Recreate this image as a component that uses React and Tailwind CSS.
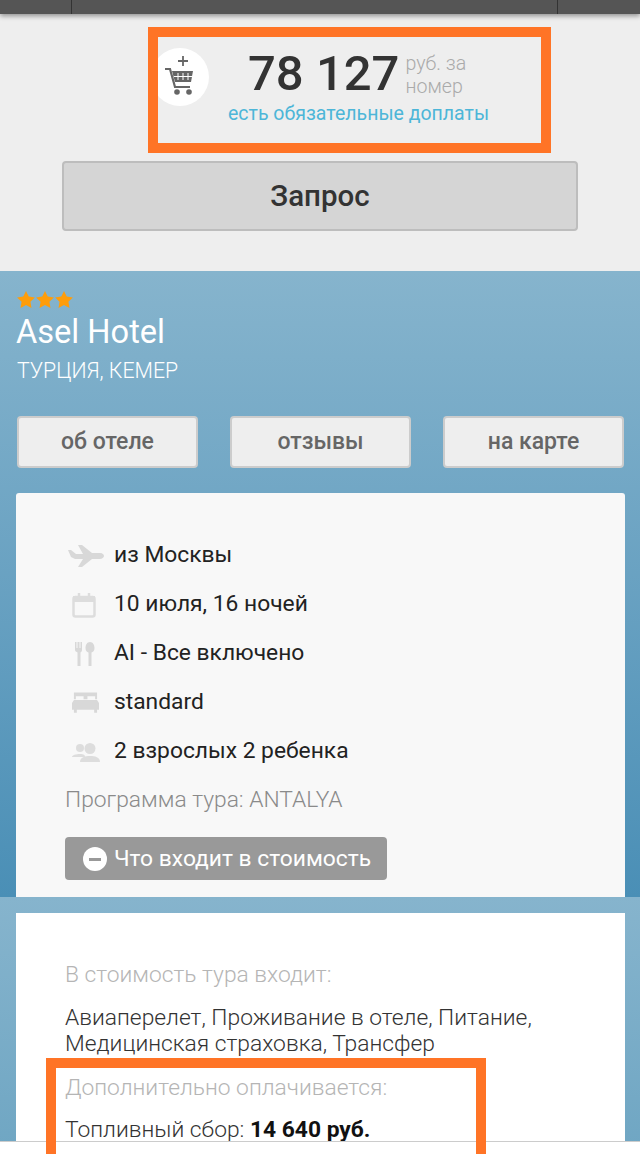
const font = { fontFamily: "Roboto, sans-serif" };

// cart with the little plus above it
function CartIcon() {
	return (
		<svg width="32" height="44" viewBox="0 0 32 44" fill="none">
			<path d="M14 7h10M19 2v10" stroke="#666" strokeWidth="1.800" />
			<path d="M1 15h5l5 18h15" stroke="#666" strokeWidth="2.200" />
			<path d="M8 17h21l-2 11H11z" fill="#666" />
			<path d="M14 19v7M19 19v7M24 19v7M10 22.500h18" stroke="#fff" strokeWidth="1" />
			<circle cx="13" cy="38" r="2.800" fill="#666" />
			<circle cx="25" cy="38" r="2.800" fill="#666" />
		</svg>
	);
}

function PlaneIcon() {
	return (
		<svg width="36" height="22" viewBox="0 0 36 22" fill="#d8d8d8">
			<path d="M0 5h3l5 4h7L10 0h4l10 8h8c3 0 4 2 4 3s-2 3-4 3h-8L14 22h-4l5-8H7L3 12z" />
		</svg>
	);
}

function CalendarIcon() {
	return (
		<svg width="24" height="26" viewBox="0 0 24 26" fill="none">
			<rect x="1.500" y="5" width="21" height="19.500" rx="2" fill="#f8f8f8" stroke="#dddddd" strokeWidth="2.500" />
			<rect x="1" y="4" width="22" height="6" fill="#dddddd" />
			<path d="M7 1v6M17 1v6" stroke="#dddddd" strokeWidth="2.500" />
		</svg>
	);
}

function ForkIcon() {
	return (
		<svg width="20" height="24" viewBox="0 0 20 24" fill="#d8d8d8">
			<path d="M0 0h1.500v6h1V0h2v6h1V0H7v8c0 1.500-1 2-1.500 2.500V24h-3V10.500C2 10 0 9.500 0 8z" />
			<path d="M15 0c3 0 4.500 3 4.500 6s-1.500 4-3 4.500V24h-3V10.500c-1.500-.5-3-1.500-3-4.500s1.500-6 4.500-6z" />
		</svg>
	);
}

function BedIcon() {
	return (
		<svg width="27" height="21" viewBox="0 0 28 21" fill="#d8d8d8">
			<path d="M2 0h24v7h-2V4h-8v3h-4V4H4v3H2z" />
			<path d="M2 8h24l2 3v7h-2v3h-3v-3H5v3H2v-3H0v-7z" />
		</svg>
	);
}

function PeopleIcon() {
	return (
		<svg width="28" height="20" viewBox="0 0 28 20" fill="#dddddd">
			<circle cx="8" cy="6" r="4" />
			<path d="M0 15c0-2 4-3 8-3s5 1 5 3z" />
			<circle cx="18" cy="6.500" r="5.500" />
			<path d="M8 20c0-5 5-6 10-6s10 1 10 6z" />
		</svg>
	);
}

const rows = [
	{ icon: <PlaneIcon />, pad: "pl-[3px]", text: "из Москвы" },
	{ icon: <CalendarIcon />, pad: "pl-[7px]", text: "10 июля, 16 ночей" },
	{ icon: <ForkIcon />, pad: "pl-[10px]", text: "AI - Все включено" },
	{ icon: <BedIcon />, pad: "pl-[7px]", text: "standard" },
	{ icon: <PeopleIcon />, pad: "pl-[7px]", text: "2 взрослых 2 ребенка" },
];

export default function App() {
	return (
		<div className="relative h-[1154px] w-[640px] overflow-hidden bg-[#eeeeee]" style={font}>
			{/* top bar */}
			<div className="flex h-[14px] justify-between bg-[#555555] pl-[71px] pr-[82px] shadow-[0_2px_5px_rgba(0,0,0,0.4)]">
				<div className="w-[1px] bg-[#333333]" />
				<div className="w-[1px] bg-[#333333]" />
			</div>

			{/* price */}
			<div className="relative h-[257px]">
				<div className="absolute left-[151px] top-[34px] flex h-[58px] w-[58px] items-center justify-center rounded-full bg-white pb-[2px]">
					<CartIcon />
				</div>
				<div className="flex pl-[248px] pt-[35px]">
					<span className="text-[49px] leading-[50px] font-medium text-[#333333]">78 127</span>
					<span className="ml-[6px] w-[76px] pt-[3px] text-[19.600px] leading-[23px] font-light text-[#aaaaaa]">руб. за номер</span>
				</div>
				<p className="mt-[3px] pl-[228px] text-[19.500px] leading-[24px] text-[#4db6d8]">есть обязательные доплаты</p>
				<div className="mx-[62px] mt-[35px] flex h-[70px] items-center justify-center rounded-[4px] border-2 border-[#bdbdbd] bg-[#d5d5d5] text-[29.500px] font-medium text-[#333333]">
					Запрос
				</div>
			</div>

			{/* hotel block */}
			<div className="h-[626px] bg-gradient-to-b from-[#86b4cd] to-[#4a8fb6] px-[16px] pt-[20px]">
				<div className="flex gap-[1px] pl-[1px]">
					{[0, 1, 2].map((i) => (
						<svg key={i} width="18" height="17" viewBox="0 0 24 23" fill="#ff9d0a">
							<path d="M12 0l3.700 7.600 8.300 1.200-6 5.900 1.400 8.300L12 19l-7.400 4L6 14.700 0 8.800l8.300-1.200z" />
						</svg>
					))}
				</div>
				<h1 className="mt-[5px] text-[32.600px] leading-[38px] text-white">Asel Hotel</h1>
				<p className="mt-[8px] pl-[1px] text-[21.300px] leading-[24px] font-light text-white">ТУРЦИЯ, КЕМЕР</p>

				<div className="mt-[33px] flex justify-between pl-[1px]">
					{["об отеле", "отзывы", "на карте"].map((t) => (
						<div key={t} className="flex h-[52px] w-[181px] items-center justify-center rounded-[4px] border-2 border-[#cccccc] bg-[#eeeeee] pt-[1px] text-[23px] font-medium text-[#666666]">
							{t}
						</div>
					))}
				</div>

				<div className="mt-[25px] h-[404px] w-[609px] rounded-t-[3px] bg-[#f8f8f8] pl-[49px] pt-[38px]">
					{rows.map((r) => (
						<div key={r.text} className="flex h-[49px] items-center">
							<div className={`flex w-[49px] ${r.pad}`}>{r.icon}</div>
							<span className="text-[22.800px] text-[#222222]">{r.text}</span>
						</div>
					))}
					<p className="-mt-[1px] text-[22.800px] leading-[49px] font-light text-[#8a8a8a]">Программа тура: ANTALYA</p>
					<div className="mt-[13px] flex h-[43px] w-[322px] items-center rounded-[4px] bg-[#999999] pl-[18px] pt-[1px] text-[22.800px] text-white">
						<span className="mr-[7px] flex h-[24px] w-[24px] items-center justify-center rounded-full bg-white">
							<span className="h-[3px] w-[12px] bg-[#999999]" />
						</span>
						Что входит в стоимость
					</div>
				</div>
			</div>

			{/* price details */}
			<div className="h-[257px] bg-gradient-to-b from-[#86b4cd] to-[#6fa6c3] px-[16px] pt-[16px]">
				<div className="h-full w-[609px] bg-white pl-[49px] pt-[47px] text-[22.800px] font-light">
					<p className="leading-[30px] text-[#b5b5b5]">В стоимость тура входит:</p>
					<p className="mt-[15px] leading-[26px] text-[#333333]">
						Авиаперелет, Проживание в отеле, Питание,
						<br />
						Медицинская страховка, Трансфер
					</p>
					<p className="mt-[16px] leading-[30px] text-[#b5b5b5]">Дополнительно оплачивается:</p>
					<p className="mt-[12px] leading-[30px] text-[#333333]">
						Топливный сбор: <b className="font-bold text-[#111111]">14 640 руб.</b>
					</p>
				</div>
			</div>

			{/* bottom strip */}
			<div className="absolute inset-x-0 bottom-0 h-[13px] border-t border-[#cccccc] bg-white" />

			{/* orange callouts drawn on top of the screenshot */}
			<div className="absolute left-[148px] top-[27px] h-[126px] w-[403px] border-10 border-[#ff7426]" />
			<div className="absolute left-[46px] top-[1058px] h-[110px] w-[440px] border-10 border-[#ff7426]" />
		</div>
	);
}
